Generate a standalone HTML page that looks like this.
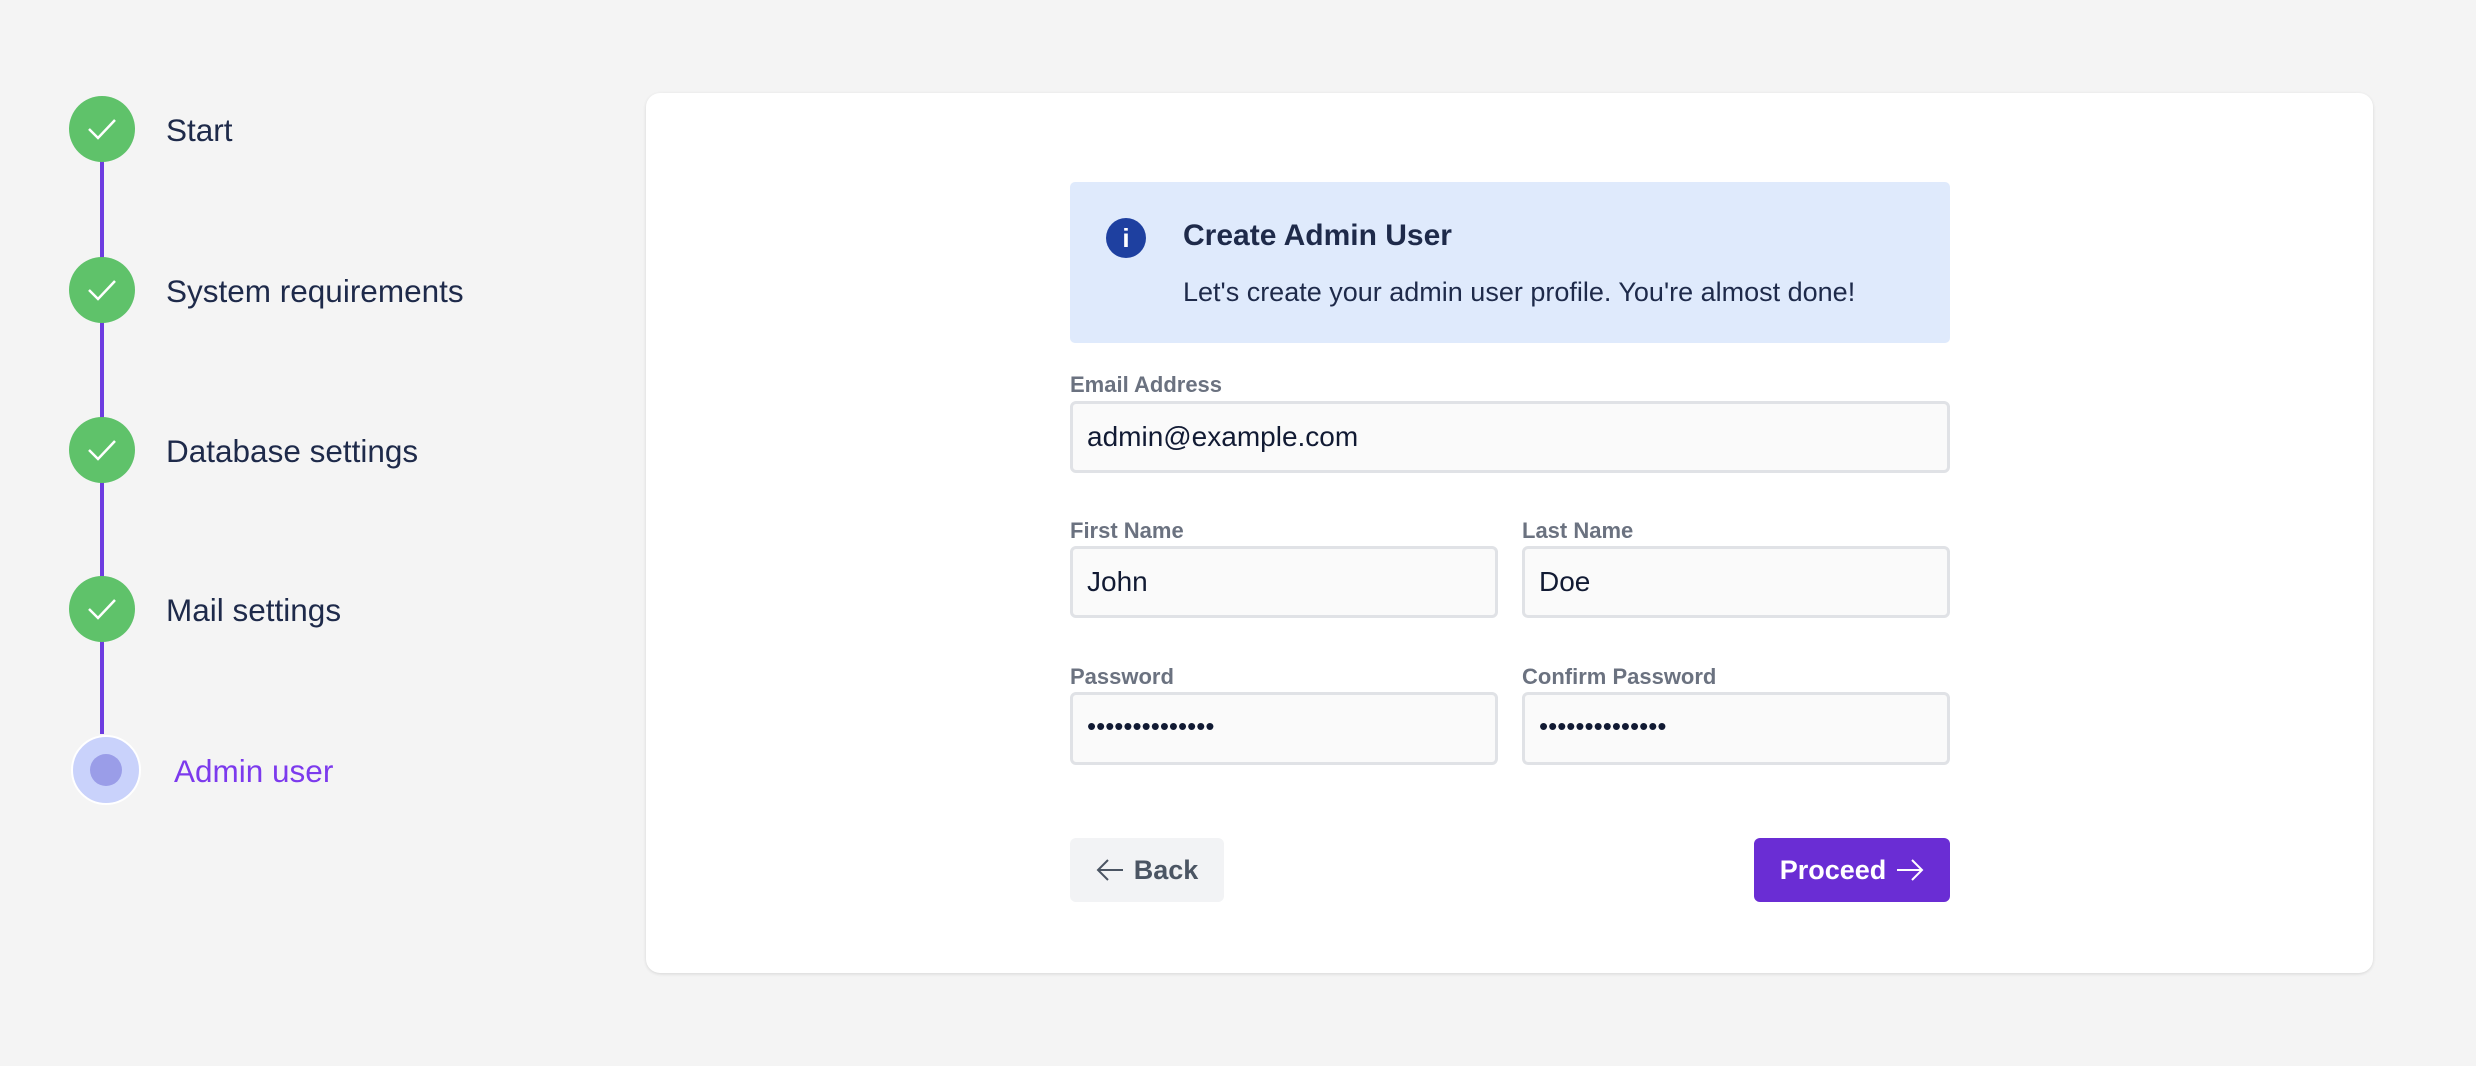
<!DOCTYPE html>
<html><head><meta charset="utf-8"><style>
*{box-sizing:border-box;margin:0;padding:0}
body{width:2476px;height:1066px;background:#f4f4f4;font-family:"Liberation Sans",Arial,sans-serif;position:relative;overflow:hidden;color:#1e2a4a}
.line{position:absolute;left:100px;top:130px;width:4px;height:604px;background:#6d3ce0}
.c{position:absolute;left:69px;width:66px;height:66px;border-radius:50%;background:#5fc26a;display:flex;align-items:center;justify-content:center}
.lbl{position:absolute;left:166px;font-size:31.5px;color:#1e2a4a;line-height:1}
.card{position:absolute;left:646px;top:93px;width:1727px;height:880px;background:#fff;border-radius:14px;box-shadow:0 1px 3px rgba(0,0,0,.12)}
.abs{position:absolute}
.info{left:1070px;top:182px;width:880px;height:161px;background:#dfeafc;border-radius:5px}
.ic{left:1106px;top:218px;width:40px;height:40px;border-radius:50%;background:#1e40a0;color:#fff;font-weight:bold;font-size:26px;text-align:center;line-height:40px}
.fl{font-size:22px;font-weight:bold;color:#6b7280}
.in{border:3px solid #e0e2e6;background:#fafafa;border-radius:6px;font-size:28px;color:#111a33;padding-left:14px;display:flex;align-items:center}
.pw{font-size:26px;letter-spacing:0;padding-bottom:4px}
</style></head><body>
<div class="line"></div>
<div class="c" style="top:96px"><svg width="34" height="34" viewBox="0 0 34 34"><path d="M4 17 L13 26 L30 8" stroke="#fff" stroke-width="2.5" fill="none"/></svg></div>
<div class="c" style="top:257px"><svg width="34" height="34" viewBox="0 0 34 34"><path d="M4 17 L13 26 L30 8" stroke="#fff" stroke-width="2.5" fill="none"/></svg></div>
<div class="c" style="top:417px"><svg width="34" height="34" viewBox="0 0 34 34"><path d="M4 17 L13 26 L30 8" stroke="#fff" stroke-width="2.5" fill="none"/></svg></div>
<div class="c" style="top:576px"><svg width="34" height="34" viewBox="0 0 34 34"><path d="M4 17 L13 26 L30 8" stroke="#fff" stroke-width="2.5" fill="none"/></svg></div>
<div class="abs" style="left:71px;top:735px;width:70px;height:70px;border-radius:50%;background:#c9d2fb;border:2px solid #fff"></div>
<div class="abs" style="left:90px;top:754px;width:32px;height:32px;border-radius:50%;background:#9a9de8"></div>
<div class="lbl" style="top:115px">Start</div>
<div class="lbl" style="top:276px">System requirements</div>
<div class="lbl" style="top:436px">Database settings</div>
<div class="lbl" style="top:595px">Mail settings</div>
<div class="lbl" style="top:756px;left:174px;color:#7c3aed">Admin user</div>

<div class="card"></div>
<div class="abs info"></div>
<div class="abs ic">i</div>
<div class="abs" style="left:1183px;top:219px;font-size:30px;font-weight:bold;color:#1e2a4a">Create Admin User</div>
<div class="abs" style="left:1183px;top:277px;font-size:27px;color:#1e2a4a">Let's create your admin user profile. You're almost done!</div>

<div class="abs fl" style="left:1070px;top:372px">Email Address</div>
<div class="abs in" style="left:1070px;top:401px;width:880px;height:72px">admin@example.com</div>

<div class="abs fl" style="left:1070px;top:518px">First Name</div>
<div class="abs fl" style="left:1522px;top:518px">Last Name</div>
<div class="abs in" style="left:1070px;top:546px;width:428px;height:72px">John</div>
<div class="abs in" style="left:1522px;top:546px;width:428px;height:72px">Doe</div>

<div class="abs fl" style="left:1070px;top:664px">Password</div>
<div class="abs fl" style="left:1522px;top:664px">Confirm Password</div>
<div class="abs in pw" style="left:1070px;top:692px;width:428px;height:73px">••••••••••••••</div>
<div class="abs in pw" style="left:1522px;top:692px;width:428px;height:73px">••••••••••••••</div>

<div class="abs" style="left:1070px;top:838px;width:154px;height:64px;background:#f2f3f5;border-radius:6px;display:flex;align-items:center;justify-content:center;gap:10px;font-size:27px;font-weight:bold;color:#4b5563">
<svg width="28" height="24" viewBox="0 0 28 24"><path d="M27 12H3M12 2L2 12l10 10" stroke="#4b5563" stroke-width="2" fill="none"/></svg>Back</div>
<div class="abs" style="left:1754px;top:838px;width:196px;height:64px;background:#6a2dd4;border-radius:6px;display:flex;align-items:center;justify-content:center;gap:10px;font-size:27px;font-weight:bold;color:#fff">
Proceed<svg width="28" height="24" viewBox="0 0 28 24"><path d="M1 12h24M16 2l10 10-10 10" stroke="#fff" stroke-width="2" fill="none"/></svg></div>
</body></html>
